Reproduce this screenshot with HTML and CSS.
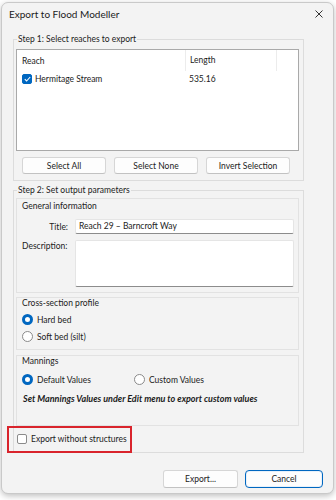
FILE: index.html
```html
<!DOCTYPE html>
<html lang="en">
<head>
    <meta charset="UTF-8" />
    <meta name="viewport" content="width=device-width, initial-scale=1" />
    <title>Export to Flood Modeller</title>
    <link rel="stylesheet" href="styles.css">
</head>
<body>
    <div class="window">
        <div class="titlebar">
            <span class="title">Export to Flood Modeller</span>
            <svg class="close" width="8" height="8" viewBox="0 0 8 8">
                <path d="M0.5 0.5L7.5 7.5M7.5 0.5L0.5 7.5" stroke="#333" stroke-width="1" fill="none"/>
            </svg>
        </div>

        <div class="content">
            <fieldset class="step step1">
                <legend>Step 1: Select reaches to export</legend>
                <div class="reach-list">
                    <div class="list-head">
                        <span class="col-reach">Reach</span>
                        <span class="col-length">Length</span>
                        <span class="col-rest"></span>
                    </div>
                    <div class="list-row">
                        <span class="col-reach">
                            <span class="check on">
                                <svg width="7" height="6" viewBox="0 0 7 6"><path d="M0.8 3.2L2.6 5L6.2 1" stroke="#fff" stroke-width="1.1" fill="none"/></svg>
                            </span>
                            Hermitage Stream
                        </span>
                        <span class="col-length">535.16</span>
                    </div>
                </div>
                <div class="btn-row">
                    <button class="btn">Select All</button>
                    <button class="btn">Select None</button>
                    <button class="btn">Invert Selection</button>
                </div>
            </fieldset>

            <fieldset class="step step2">
                <legend>Step 2: Set output parameters</legend>

                <div class="panel general">
                    <div class="panel-title">General information</div>
                    <div class="field">
                        <label class="field-label">Title:</label>
                        <div class="input">Reach 29 – Barncroft Way</div>
                    </div>
                    <div class="field field-top">
                        <label class="field-label left">Description:</label>
                        <div class="input textarea"></div>
                    </div>
                </div>

                <div class="panel profile">
                    <div class="panel-title">Cross-section profile</div>
                    <div class="options">
                        <div class="option"><span class="radio on"></span>Hard bed</div>
                        <div class="option"><span class="radio"></span>Soft bed (silt)</div>
                    </div>
                </div>

                <div class="panel mannings">
                    <div class="panel-title">Mannings</div>
                    <div class="option-row">
                        <div class="option default"><span class="radio on"></span>Default Values</div>
                        <div class="option"><span class="radio"></span>Custom Values</div>
                    </div>
                    <p class="note">Set Mannings Values under Edit menu to export custom values</p>
                </div>

                <div class="export-opt">
                    <span class="check"></span>Export without structures
                    <span class="highlight"></span>
                </div>
            </fieldset>
        </div>

        <div class="footer">
            <button class="btn wide">Export...</button>
            <button class="btn wide primary">Cancel</button>
        </div>
    </div>
</body>
</html>
```

FILE: styles.css
```css
* {
    margin: 0; padding: 0; box-sizing: border-box;
    font-family: 'Lato', 'Noto Sans', sans-serif;
}
body {
    background: #fff;
    width: 336px;
    height: 500px;
    overflow: hidden;
    font-size: 8.5px;
    color: #1b1b1b;
}
.window {
    margin: 2px 0 0 1px;
    width: 333px;
    height: 492px;
    background: #f3f3f3;
    border: 1px solid #c9c9c9;
    border-radius: 7px;
    box-shadow: 0 2px 6px rgba(0,0,0,0.25);
    display: flex;
    flex-direction: column;
}
.titlebar {
    height: 31px;
    padding: 0 10px 0 7px;
    display: flex;
    justify-content: space-between;
    align-items: flex-start;
}
.title {
    font-size: 10px;
    line-height: 11px;
    margin-top: 6px;
}
.close {
    margin-top: 7px;
}
.content {
    padding: 0 29px 0 11px;
}
.step {
    border: 1px solid #dcdcdc;
    padding: 0 4px 6px 2px;
}
.step legend {
    margin-left: 1px;
    padding: 0 1px;
    line-height: 11px;
}
.step1 {
    padding-top: 4px;
}
.reach-list {
    background: #fff;
    border: 1px solid #a9a9a9;
    height: 102px;
}
.list-head, .list-row {
    display: flex;
    height: 21px;
    align-items: center;
}
.list-row {
    height: 16px;
}
.col-reach {
    width: 168px;
    padding-left: 5px;
    display: flex;
    align-items: center;
}
.col-length {
    width: 91px;
    padding-left: 4px;
}
.list-head .col-length, .list-head .col-rest {
    border-left: 1px solid #ececec;
    height: 21px;
    line-height: 21px;
}
.list-head .col-rest {
    flex: 1;
}
.check {
    width: 10px;
    height: 10px;
    border: 1px solid #8a8a8a;
    border-radius: 2px;
    background: #fff;
    margin-right: 3px;
    display: inline-flex;
    align-items: center;
    justify-content: center;
    flex-shrink: 0;
}
.check.on {
    background: #0067c0;
    border-color: #0067c0;
}
.btn-row {
    display: flex;
    gap: 8px;
    padding: 6px 0 0 6px;
}
.btn {
    width: 84px;
    height: 17px;
    background: #fdfdfd;
    border: 1px solid #d6d6d6;
    border-bottom-color: #c2c2c2;
    border-radius: 3px;
    font-size: 8.5px;
    color: #1b1b1b;
}
.step2 {
    margin-top: 4px;
    padding-top: 1px;
    padding-bottom: 5px;
}
.panel {
    border: 1px solid #e2e2e2;
    margin-top: 4px;
    padding: 0 4px 0 5px;
}
.panel-title {
    line-height: 11px;
}
.general {
    padding-top: 2px;
    padding-bottom: 5px;
    margin-top: 1px;
}
.field {
    display: flex;
    align-items: center;
    gap: 7px;
    margin-top: 7px;
}
.field-top {
    align-items: flex-start;
    margin-top: 6px;
}
.field-label {
    width: 46px;
    text-align: right;
}
.field-label.left {
    text-align: left;
    margin-top: 1px;
}
.input {
    flex: 1;
    height: 15px;
    background: #fff;
    border: 1px solid #e5e5e5;
    border-bottom: 1px solid #8c8c8c;
    border-radius: 2px;
    padding-left: 3px;
    line-height: 13px;
}
.textarea {
    height: 47px;
}
.profile {
    padding-bottom: 4px;
}
.options {
    margin-top: 2px;
}
.option {
    display: flex;
    align-items: center;
    height: 17px;
}
.radio {
    width: 11px;
    height: 11px;
    border-radius: 50%;
    border: 1px solid #8a8a8a;
    background: #fff;
    margin-right: 4px;
    flex-shrink: 0;
}
.radio.on {
    border: 3px solid #0067c0;
}
.mannings {
    margin-top: 5px;
    height: 71px;
}
.option-row {
    display: flex;
    margin-top: 4px;
}
.option.default {
    width: 112px;
}
.note {
    font-weight: bold;
    font-style: italic;
    font-size: 9px;
    line-height: 11px;
    margin-top: 5px;
    padding-left: 1px;
}
.export-opt {
    position: relative;
    display: flex;
    align-items: center;
    height: 17px;
    margin-top: 4px;
    padding-left: 1px;
}
.export-opt .check {
    margin-right: 4px;
}
.highlight {
    position: absolute;
    left: -9px;
    top: -4px;
    width: 125px;
    height: 27px;
    border: 2px solid #d9242c;
}
.footer {
    display: flex;
    justify-content: flex-end;
    gap: 7px;
    padding: 5px 10px 0 0;
    margin-top: auto;
    margin-bottom: 5px;
}
.wide {
    width: 75px;
    height: 18px;
}
.primary {
    width: 78px;
    border: 1px solid #0067c0;
    box-shadow: inset 0 0 0 1px #e8f1fa;
    border-radius: 4px;
}
```
